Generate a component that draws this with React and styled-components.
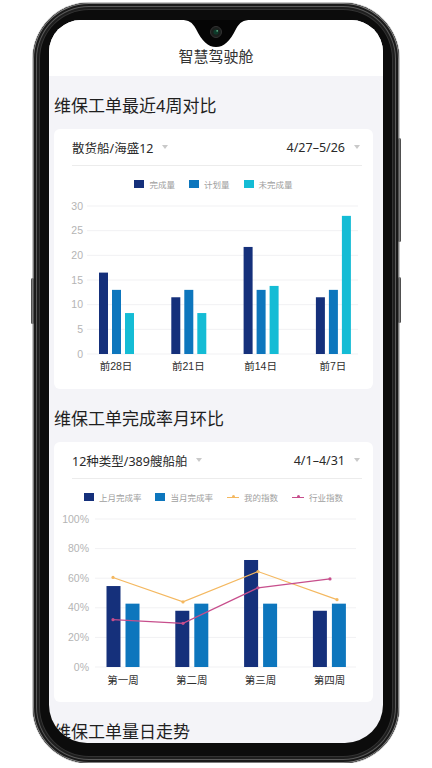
import React from 'react';
import styled, { createGlobalStyle } from 'styled-components';

const GlobalStyle = createGlobalStyle`
  html, body { margin: 0; padding: 0; background: #fff; }
  body { font-family: "Liberation Sans", "Noto Sans CJK SC", sans-serif; }
  * { box-sizing: border-box; }
`;

const Phone = styled.div`
  position: relative;
  width: 366px;
  height: 760px;
  margin: 3px 0 0 33px;
  padding: 17px 16px 0;
  border-radius: 56px;
  background: #0c0c0c;
  box-shadow:
    0 0 0 1px #c4c4c4,
    inset 0 0 0 1px #7d7d7d,
    inset 0 0 0 3px #1a1a1a,
    inset 0 0 0 4px #5a5a5a,
    inset 0 0 0 6px #1e1e1e,
    inset 0 0 0 7px #333;
`;

const SideButton = styled.div`
  position: absolute;
  top: ${p => p.top}px;
  height: ${p => p.h}px;
  ${p => (p.left ? 'left: -2px;' : 'right: -2px;')}
  width: 3px;
  border-radius: 2px;
  background: linear-gradient(90deg, #3a3a3a, #7a7a7a, #3a3a3a);
`;

const Notch = styled.svg`
  position: absolute;
  top: 17px;
  left: 148px;
  width: 70px;
  height: 28px;
`;

const Screen = styled.div`
  height: 723px;
  border-radius: 32px 32px 38px 38px;
  overflow: hidden;
  background: #f4f4f8;
`;

const Header = styled.div`
  height: 56px;
  padding-top: 27px;
  background: #fff;
  text-align: center;
  font-size: 15px;
  line-height: 20px;
  color: #333;
`;

const Content = styled.div`
  padding: 0 10px 0 5px;
`;

const SectionTitle = styled.div`
  padding-top: 19px;
  margin-bottom: 10px;
  font-size: 17px;
  line-height: 24px;
  color: #1f1f1f;
`;

const Card = styled.div`
  height: 260px;
  background: #fff;
  border-radius: 6px;
`;

const CardHead = styled.div`
  display: flex;
  align-items: center;
  justify-content: space-between;
  height: 37px;
  margin: 0 11px 0 18px;
  border-bottom: 1px solid #ececec;
  font-family: "Noto Sans", "Noto Sans CJK SC", sans-serif;
  font-size: 12.5px;
  color: #2a2a2a;
`;

const Picker = styled.div`
  display: flex;
  align-items: center;
  gap: 9px;
`;

const Caret = styled.span`
  width: 0;
  height: 0;
  border-left: 3.5px solid transparent;
  border-right: 3.5px solid transparent;
  border-top: 4px solid #c9c9c9;
  margin-right: ${p => p.mr || 0}px;
`;

const Legend = styled.div`
  display: flex;
  justify-content: center;
  align-items: center;
  gap: 14px;
  height: 20px;
  margin-top: 8px;
`;

const LegendItem = styled.div`
  display: flex;
  align-items: center;
  gap: 5px;
  font-size: 8.5px;
  color: #a0a0a0;
`;

const Swatch = styled.span`
  width: 10px;
  height: 8px;
  background: ${p => p.color};
`;

const LineSwatch = styled.span`
  position: relative;
  width: 12px;
  height: 1px;
  background: ${p => p.color};
  &::after {
    content: '';
    position: absolute;
    left: 4.5px;
    top: -1.5px;
    width: 3px;
    height: 3px;
    border-radius: 50%;
    background: ${p => p.color};
  }
`;

const Chart = styled.svg`
  display: block;
  width: 319px;
  height: 186px;
  font-family: "Liberation Sans", "Noto Sans CJK SC", sans-serif;
`;

const NAVY = '#15307b';
const BLUE = '#0d76bd';
const CYAN = '#14bcd5';
const ORANGE = '#f4b860';
const PINK = '#c74e8c';

const BASE = 160;
const SPAN = 148;

function WeeklyChart() {
  const max = 30;
  const y = v => BASE - (v / max) * SPAN;
  const data = [
    { label: '前28日', v: [16.5, 13, 8.3] },
    { label: '前21日', v: [11.5, 13, 8.3] },
    { label: '前14日', v: [21.7, 13, 13.8] },
    { label: '前7日', v: [11.5, 13, 28] },
  ];
  const colors = [NAVY, BLUE, CYAN];
  return (
    <Chart viewBox="0 0 319 186">
      {[0, 5, 10, 15, 20, 25, 30].map(t => (
        <g key={t}>
          <line x1="33" x2="304" y1={y(t)} y2={y(t)} stroke="#f1f1f3" strokeWidth="1" />
          <text x="29" y={y(t)} dy="3.5" textAnchor="end" fontSize="10.5" fill="#b4b4b4">{t}</text>
        </g>
      ))}
      {data.map((d, i) => {
        const c = 62 + 72.3 * i;
        return (
          <g key={d.label}>
            {d.v.map((v, j) => (
              <rect key={j} x={c - 17 + j * 13} y={y(v)} width="9" height={BASE - y(v)} fill={colors[j]} />
            ))}
            <text x={c} y="176" textAnchor="middle" fontSize="10.5" fill="#2e2e2e">{d.label}</text>
          </g>
        );
      })}
    </Chart>
  );
}

function MonthlyChart() {
  const y = p => BASE - (p / 100) * SPAN;
  const groups = [
    { label: '第一周', last: 54.7, cur: 42.8 },
    { label: '第二周', last: 38, cur: 42.8 },
    { label: '第三周', last: 72.3, cur: 42.8 },
    { label: '第四周', last: 38, cur: 42.8 },
  ];
  const mine = [[59, 60.5], [129, 44], [204, 64.5], [283, 45.5]];
  const industry = [[59, 32], [129, 29.5], [204, 53.5], [276, 59.5]];
  const pts = arr => arr.map(([x, p]) => `${x},${y(p)}`).join(' ');
  return (
    <Chart viewBox="0 0 319 186">
      {[0, 20, 40, 60, 80, 100].map(t => (
        <g key={t}>
          <line x1="41" x2="302" y1={y(t)} y2={y(t)} stroke="#f1f1f3" strokeWidth="1" />
          <text x="35" y={y(t)} dy="3.5" textAnchor="end" fontSize="10.5" fill="#b4b4b4">{t}%</text>
        </g>
      ))}
      {groups.map((g, i) => {
        const c = 69 + 68.8 * i;
        return (
          <g key={g.label}>
            <rect x={c - 16.5} y={y(g.last)} width="14" height={BASE - y(g.last)} fill={NAVY} />
            <rect x={c + 2.5} y={y(g.cur)} width="14" height={BASE - y(g.cur)} fill={BLUE} />
            <text x={c} y="177" textAnchor="middle" fontSize="10.5" fill="#2e2e2e">{g.label}</text>
          </g>
        );
      })}
      <polyline points={pts(mine)} fill="none" stroke={ORANGE} strokeWidth="1.2" />
      <polyline points={pts(industry)} fill="none" stroke={PINK} strokeWidth="1.2" />
      {mine.map(([x, p]) => <circle key={'m' + x} cx={x} cy={y(p)} r="1.6" fill={ORANGE} />)}
      {industry.map(([x, p]) => <circle key={'i' + x} cx={x} cy={y(p)} r="1.6" fill={PINK} />)}
    </Chart>
  );
}

export default function App() {
  return (
    <>
      <GlobalStyle />
      <Phone>
        <SideButton top={135} h={104} />
        <SideButton top={274} h={46} />
        <SideButton left top={275} h={46} />
        <Screen>
          <Header>智慧驾驶舱</Header>
          <Content>
            <SectionTitle>维保工单最近4周对比</SectionTitle>
            <Card>
              <CardHead>
                <Picker>散货船/海盛12<Caret /></Picker>
                <Picker>4/27–5/26<Caret mr={2} /></Picker>
              </CardHead>
              <Legend>
                <LegendItem><Swatch color={NAVY} />完成量</LegendItem>
                <LegendItem><Swatch color={BLUE} />计划量</LegendItem>
                <LegendItem><Swatch color={CYAN} />未完成量</LegendItem>
              </Legend>
              <WeeklyChart />
            </Card>
            <SectionTitle>维保工单完成率月环比</SectionTitle>
            <Card>
              <CardHead>
                <Picker>12种类型/389艘船舶<Caret /></Picker>
                <Picker>4/1–4/31<Caret mr={2} /></Picker>
              </CardHead>
              <Legend>
                <LegendItem><Swatch color={NAVY} />上月完成率</LegendItem>
                <LegendItem><Swatch color={BLUE} />当月完成率</LegendItem>
                <LegendItem><LineSwatch color={ORANGE} />我的指数</LegendItem>
                <LegendItem><LineSwatch color={PINK} />行业指数</LegendItem>
              </Legend>
              <MonthlyChart />
            </Card>
            <SectionTitle>维保工单量日走势</SectionTitle>
          </Content>
        </Screen>
        <Notch viewBox="0 0 70 28">
          <path d="M0 0 C8 0 11 2 15 9 C21 21 27 27 35 27 C43 27 49 21 55 9 C59 2 62 0 70 0 Z" fill="#050505" />
          <circle cx="35" cy="12" r="5.5" fill="#1b1f1d" stroke="#333" strokeWidth="1" />
          <circle cx="35" cy="12" r="2.6" fill="#0e3a2a" />
          <circle cx="36.2" cy="10.8" r="0.9" fill="#5fae86" />
        </Notch>
      </Phone>
    </>
  );
}
